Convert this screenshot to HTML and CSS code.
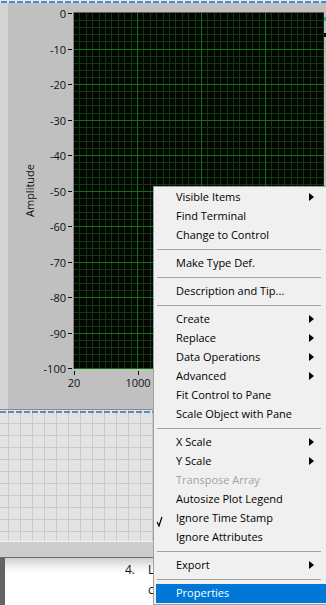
FILE: index.html
```html
<!DOCTYPE html>
<html>
<head>
<meta charset="utf-8">
<link rel="stylesheet" href="styles.css">
</head>
<body>
<div class="top"></div>
<div class="panel">
  <div class="strip"></div>
  <div class="main">
    <div class="band"></div>
    <div class="chartrow">
      <div class="ytitle"><span>Amplitude</span></div>
      <div class="ylabels">
        <div class="yl"><span>0</span><i></i></div>
        <div class="yl"><span>-10</span><i></i></div>
        <div class="yl"><span>-20</span><i></i></div>
        <div class="yl"><span>-30</span><i></i></div>
        <div class="yl"><span>-40</span><i></i></div>
        <div class="yl"><span>-50</span><i></i></div>
        <div class="yl"><span>-60</span><i></i></div>
        <div class="yl"><span>-70</span><i></i></div>
        <div class="yl"><span>-80</span><i></i></div>
        <div class="yl"><span>-90</span><i></i></div>
        <div class="yl"><span>-100</span><i></i></div>
      </div>
      <svg class="plot" width="251" height="357" viewBox="73 12 251 357" shape-rendering="crispEdges">
        <rect x="73" y="12" width="251" height="357" fill="#050505"/>
        <path stroke="#0c3b0c" stroke-width="1" fill="none" d="M79.5 12V369M86.5 12V369M92.5 12V369M99.5 12V369M105.5 12V369M111.5 12V369M118.5 12V369M124.5 12V369M131.5 12V369M143.5 12V369M150.5 12V369M156.5 12V369M163.5 12V369M169.5 12V369M175.5 12V369M182.5 12V369M188.5 12V369M195.5 12V369M207.5 12V369M214.5 12V369M220.5 12V369M227.5 12V369M233.5 12V369M239.5 12V369M246.5 12V369M252.5 12V369M259.5 12V369M271.5 12V369M278.5 12V369M284.5 12V369M291.5 12V369M297.5 12V369M303.5 12V369M310.5 12V369M316.5 12V369M323.5 12V369M73 20.5H324M73 27.5H324M73 34.5H324M73 41.5H324M73 56.5H324M73 63.5H324M73 70.5H324M73 77.5H324M73 91.5H324M73 98.5H324M73 105.5H324M73 113.5H324M73 127.5H324M73 134.5H324M73 141.5H324M73 148.5H324M73 162.5H324M73 169.5H324M73 177.5H324M73 184.5H324M73 198.5H324M73 205.5H324M73 212.5H324M73 219.5H324M73 233.5H324M73 241.5H324M73 248.5H324M73 255.5H324M73 269.5H324M73 276.5H324M73 283.5H324M73 290.5H324M73 305.5H324M73 312.5H324M73 319.5H324M73 326.5H324M73 340.5H324M73 347.5H324M73 354.5H324M73 361.5H324"/>
        <path stroke="#0a780a" stroke-width="1" fill="none" d="M137.5 12V369M201.5 12V369M265.5 12V369M73 49.5H324M73 84.5H324M73 120.5H324M73 155.5H324M73 191.5H324M73 226.5H324M73 262.5H324M73 297.5H324M73 333.5H324M73 368.5H324"/>
        <path stroke="#5e5e5e" stroke-width="1" d="M73 12.5H324"/>
        <path stroke="#858585" stroke-width="1" d="M73.5 12V369"/>
      </svg>
      <div class="rcol"><i class="m1"></i><i class="m2"></i></div>
    </div>
    <div class="xaxis">
      <div class="xc"><i></i><span>20</span></div>
      <div class="xc"><i></i><span>1000</span></div>
    </div>
  </div>
</div>
<div class="grid"></div>
<div class="wline"></div>
<div class="bar"></div>
<div class="doc">
  <div class="dstrip"></div>
  <div class="dtext">
    <div class="dl"><span class="num">4.</span><span class="dt">L</span></div>
    <div class="dl dl2">c</div>
  </div>
</div>

<div class="menu">
  <div class="mi"><span class="ck"></span><span class="lab">Visible Items</span><span class="arr"></span></div>
  <div class="mi"><span class="ck"></span><span class="lab">Find Terminal</span></div>
  <div class="mi"><span class="ck"></span><span class="lab">Change to Control</span></div>
  <div class="sp"></div>
  <div class="mi"><span class="ck"></span><span class="lab">Make Type Def.</span></div>
  <div class="sp"></div>
  <div class="mi"><span class="ck"></span><span class="lab">Description and Tip...</span></div>
  <div class="sp"></div>
  <div class="mi"><span class="ck"></span><span class="lab">Create</span><span class="arr"></span></div>
  <div class="mi"><span class="ck"></span><span class="lab">Replace</span><span class="arr"></span></div>
  <div class="mi"><span class="ck"></span><span class="lab">Data Operations</span><span class="arr"></span></div>
  <div class="mi"><span class="ck"></span><span class="lab">Advanced</span><span class="arr"></span></div>
  <div class="mi"><span class="ck"></span><span class="lab">Fit Control to Pane</span></div>
  <div class="mi"><span class="ck"></span><span class="lab">Scale Object with Pane</span></div>
  <div class="sp"></div>
  <div class="mi"><span class="ck"></span><span class="lab">X Scale</span><span class="arr"></span></div>
  <div class="mi"><span class="ck"></span><span class="lab">Y Scale</span><span class="arr"></span></div>
  <div class="mi dis"><span class="ck"></span><span class="lab">Transpose Array</span></div>
  <div class="mi"><span class="ck"></span><span class="lab">Autosize Plot Legend</span></div>
  <div class="mi"><span class="ck"><svg width="7" height="11" viewBox="0 0 7 11"><polyline points="1.2,6 3,10 5.9,1" fill="none" stroke="#000" stroke-width="1.2"/></svg></span><span class="lab">Ignore Time Stamp</span></div>
  <div class="mi"><span class="ck"></span><span class="lab">Ignore Attributes</span></div>
  <div class="sp"></div>
  <div class="mi"><span class="ck"></span><span class="lab">Export</span><span class="arr"></span></div>
  <div class="sp"></div>
  <div class="mi hl"><span class="ck"></span><span class="lab">Properties</span></div>
</div>
</body>
</html>
```

FILE: styles.css
```css
html, body {
  margin: 0;
  padding: 0;
}
body {
  width: 326px;
  height: 605px;
  overflow: hidden;
  position: relative;
  font-family: "Open Sans", "Liberation Sans", sans-serif;
  font-size: 11px;
  color: #000;
  background: #fff;
}

.top {
  height: 3px;
  background-color: #e6ebf0;
  background-image: repeating-linear-gradient(90deg, #4789c6 0 6px, transparent 6px 8px);
  background-size: 100% 2px;
  background-position: 1px 1px;
  background-repeat: no-repeat;
}

.panel {
  display: flex;
  border-bottom: 1px solid #8e8e8e;
}
.strip {
  width: 8px;
  flex: none;
  background: #d4d4d4;
}
.main {
  flex: 1;
  background: #c0c0c0;
}
.band {
  height: 9px;
}
.chartrow {
  display: flex;
  height: 357px;
}
.ytitle {
  width: 32px;
  flex: none;
  box-sizing: border-box;
  padding-left: 14px;
  display: flex;
  align-items: center;
}
.ytitle span {
  writing-mode: vertical-rl;
  transform: rotate(180deg);
  line-height: 15px;
  font-size: 11px;
  color: #111;
  white-space: nowrap;
}
.ylabels {
  width: 33px;
  flex: none;
  box-sizing: border-box;
  margin: -5px 0 -6px;
  display: flex;
  flex-direction: column;
  justify-content: space-between;
}
.yl {
  height: 13px;
  line-height: 13px;
  display: flex;
  align-items: center;
  justify-content: flex-end;
  gap: 2px;
  padding-right: 1px;
  color: #111;
}
.yl i {
  display: block;
  width: 4px;
  height: 1px;
  background: #000;
}
.plot {
  display: block;
  flex: none;
}
.rcol {
  width: 2px;
  flex: none;
}
.rcol i {
  display: block;
  width: 2px;
  height: 4px;
}
.rcol .m1 {
  margin-top: 5px;
  background: #3aa6b8;
}
.rcol .m2 {
  margin-top: 12px;
  background: #000;
}
.xaxis {
  height: 40px;
  display: flex;
  padding-left: 34px;
}
.xc {
  width: 64px;
  flex: none;
}
.xc i {
  display: block;
  width: 1px;
  height: 4px;
  margin: 2px 0 0 32px;
  background: #000;
}
.xc span {
  display: block;
  text-align: center;
  line-height: 13px;
  margin-top: 1px;
  color: #111;
}

.grid {
  height: 131px;
  background-color: #e3e3e3;
  background-image:
    repeating-linear-gradient(90deg, #5a8dbb 0 6px, #e3e8ee 6px 8px),
    linear-gradient(90deg, #c9c9c9 1px, transparent 1px),
    linear-gradient(180deg, #c9c9c9 1px, transparent 1px);
  background-size: 100% 2px, 12px 100%, 100% 12px;
  background-position: 0 1px, 8px 0, 0 13px;
  background-repeat: no-repeat, repeat-x, repeat-y;
}
.wline {
  height: 1px;
  background: #f4f4f4;
}
.bar {
  height: 15px;
  background: #cdcdcd;
  border-bottom: 1px solid #6e6e6e;
}
.doc {
  display: flex;
  height: 47px;
}
.dstrip {
  width: 5px;
  flex: none;
  background: #646464;
}
.dtext {
  flex: 1;
  background: linear-gradient(180deg, #cfcfcf 0, #f4f4f4 10px, #fff 16px);
  padding: 2px 0 0 120px;
  font-size: 12px;
  line-height: 20px;
  color: #111;
  white-space: nowrap;
}
.dt {
  margin-left: 13px;
}
.dl2 {
  padding-left: 23px;
}

.menu {
  position: absolute;
  left: 153px;
  top: 186px;
  width: 176px;
  box-sizing: border-box;
  border: 1px solid #a0a0a0;
  background: #f0f0f0;
  padding: 1px 2px;
  font-size: 11px;
}
.mi {
  display: flex;
  align-items: flex-start;
  height: 19px;
  box-sizing: border-box;
  padding: 0 12px 2px 0;
  line-height: 17px;
  white-space: nowrap;
}
.ck {
  width: 20px;
  height: 17px;
  flex: none;
}
.ck svg {
  display: block;
  margin-top: 7px;
}
.lab {
  flex: 1;
}
.arr {
  width: 0;
  height: 0;
  flex: none;
  margin-top: 5px;
  border-left: 5px solid #000;
  border-top: 4px solid transparent;
  border-bottom: 4px solid transparent;
}
.sp {
  height: 1px;
  margin: 4px 5px 4px 1px;
  background: #a3a3a3;
}
.dis {
  color: #a2a2a2;
}
.hl {
  background: #0078d7;
  color: #fff;
}
```
